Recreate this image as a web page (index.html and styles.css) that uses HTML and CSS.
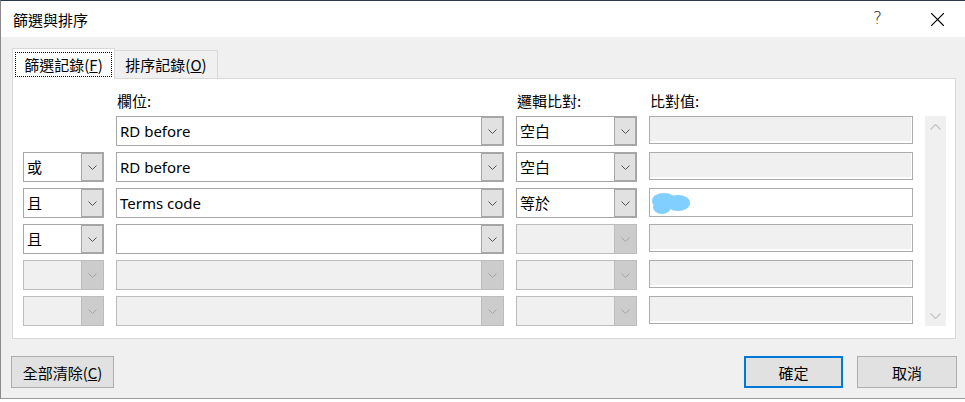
FILE: index.html
```html
<!DOCTYPE html>
<html lang="zh-Hant">
<head>
    <meta charset="UTF-8">
    <title>篩選與排序</title>
    <link rel="stylesheet" href="styles.css">
</head>
<body>
    <div class="window">
        <div class="titlebar">
            <span class="title">篩選與排序</span>
            <span class="help">?</span>
            <svg class="close" width="13" height="13" viewBox="0 0 13 13"><path d="M0.5 0.5 L12.5 12.5 M12.5 0.5 L0.5 12.5" stroke="#000" stroke-width="1.1" fill="none"/></svg>
        </div>
        <div class="dialog">
            <div class="tabs">
                <div class="tab active"><span class="focus">篩選記錄(<u>F</u>)</span></div>
                <div class="tab">排序記錄(<u>O</u>)</div>
            </div>
            <div class="panel">
                <div class="grid">
                    <div class="label col-field">欄位:</div>
                    <div class="label col-logic">邏輯比對:</div>
                    <div class="label col-value">比對值:</div>

                    <!-- row 1 -->
                    <div class="col-field combo"><span>RD before</span><i class="drop"><svg viewBox="0 0 9 5"><path d="M0.5 0.5 L4.5 4.5 L8.5 0.5"/></svg></i></div>
                    <div class="combo"><span class="cjk">空白</span><i class="drop"><svg viewBox="0 0 9 5"><path d="M0.5 0.5 L4.5 4.5 L8.5 0.5"/></svg></i></div>
                    <div class="value off"></div>

                    <!-- scrollbar spans all rows -->
                    <div class="scroll">
                        <svg viewBox="0 0 11 6"><path d="M0.5 5.5 L5.5 0.5 L10.5 5.5"/></svg>
                        <svg viewBox="0 0 11 6"><path d="M0.5 0.5 L5.5 5.5 L10.5 0.5"/></svg>
                    </div>

                    <!-- row 2 -->
                    <div class="combo"><span class="cjk">或</span><i class="drop"><svg viewBox="0 0 9 5"><path d="M0.5 0.5 L4.5 4.5 L8.5 0.5"/></svg></i></div>
                    <div class="combo"><span>RD before</span><i class="drop"><svg viewBox="0 0 9 5"><path d="M0.5 0.5 L4.5 4.5 L8.5 0.5"/></svg></i></div>
                    <div class="combo"><span class="cjk">空白</span><i class="drop"><svg viewBox="0 0 9 5"><path d="M0.5 0.5 L4.5 4.5 L8.5 0.5"/></svg></i></div>
                    <div class="value off"></div>

                    <!-- row 3 -->
                    <div class="combo"><span class="cjk">且</span><i class="drop"><svg viewBox="0 0 9 5"><path d="M0.5 0.5 L4.5 4.5 L8.5 0.5"/></svg></i></div>
                    <div class="combo"><span>Terms code</span><i class="drop"><svg viewBox="0 0 9 5"><path d="M0.5 0.5 L4.5 4.5 L8.5 0.5"/></svg></i></div>
                    <div class="combo"><span class="cjk">等於</span><i class="drop"><svg viewBox="0 0 9 5"><path d="M0.5 0.5 L4.5 4.5 L8.5 0.5"/></svg></i></div>
                    <div class="value"><svg class="blot" width="42" height="24" viewBox="0 0 42 24"><ellipse cx="13" cy="10" rx="12" ry="8"/><ellipse cx="27" cy="12" rx="12" ry="8"/><ellipse cx="11" cy="16" rx="9" ry="7"/></svg></div>

                    <!-- row 4 -->
                    <div class="combo"><span class="cjk">且</span><i class="drop"><svg viewBox="0 0 9 5"><path d="M0.5 0.5 L4.5 4.5 L8.5 0.5"/></svg></i></div>
                    <div class="combo"><span></span><i class="drop"><svg viewBox="0 0 9 5"><path d="M0.5 0.5 L4.5 4.5 L8.5 0.5"/></svg></i></div>
                    <div class="combo off"><span></span><i class="drop"><svg viewBox="0 0 9 5"><path d="M0.5 0.5 L4.5 4.5 L8.5 0.5"/></svg></i></div>
                    <div class="value off"></div>

                    <!-- row 5 -->
                    <div class="combo off"><span></span><i class="drop"><svg viewBox="0 0 9 5"><path d="M0.5 0.5 L4.5 4.5 L8.5 0.5"/></svg></i></div>
                    <div class="combo off"><span></span><i class="drop"><svg viewBox="0 0 9 5"><path d="M0.5 0.5 L4.5 4.5 L8.5 0.5"/></svg></i></div>
                    <div class="combo off"><span></span><i class="drop"><svg viewBox="0 0 9 5"><path d="M0.5 0.5 L4.5 4.5 L8.5 0.5"/></svg></i></div>
                    <div class="value off"></div>

                    <!-- row 6 -->
                    <div class="combo off"><span></span><i class="drop"><svg viewBox="0 0 9 5"><path d="M0.5 0.5 L4.5 4.5 L8.5 0.5"/></svg></i></div>
                    <div class="combo off"><span></span><i class="drop"><svg viewBox="0 0 9 5"><path d="M0.5 0.5 L4.5 4.5 L8.5 0.5"/></svg></i></div>
                    <div class="combo off"><span></span><i class="drop"><svg viewBox="0 0 9 5"><path d="M0.5 0.5 L4.5 4.5 L8.5 0.5"/></svg></i></div>
                    <div class="value off"></div>
                </div>
            </div>
            <div class="buttons">
                <button class="btn clear">全部清除(<u>C</u>)</button>
                <span class="spacer"></span>
                <button class="btn ok">確定</button>
                <button class="btn">取消</button>
            </div>
        </div>
    </div>
</body>
</html>
```

FILE: styles.css
```css
body {
    margin: 0;
    background-color: #fff;
    font-family: "Noto Sans", "Noto Sans CJK TC", sans-serif;
    color: #000;
    width: 965px;
    height: 402px;
    overflow: hidden;
}
.window {
    width: 965px;
    height: 399px;
    box-sizing: border-box;
    border-top: 1px solid #2b3a4b;
    border-left: 1px solid #8a8a8a;
    border-bottom: 1px solid #9a9a9a;
    background-color: #f0f0f0;
}
.titlebar {
    height: 36px;
    background-color: #fff;
    display: flex;
    align-items: center;
}
.title {
    margin-left: 12px;
    font-size: 15px;
    font-family: "Noto Sans CJK TC", sans-serif;
    flex-grow: 1;
}
.help {
    font-size: 17px;
    font-family: "DejaVu Sans", sans-serif;
    font-weight: 300;
    margin-right: 49px;
    margin-top: -2px;
    color: #222;
}
.close {
    margin-right: 21px;
    stroke-linecap: square;
}
.dialog {
    padding: 11px 8px 0 11px;
}
.tabs {
    display: flex;
    align-items: flex-end;
    height: 30px;
}
.tab {
    box-sizing: border-box;
    width: 103px;
    height: 28px;
    border: 1px solid #d9d9d9;
    border-bottom: none;
    border-left: none;
    background-color: #f0f0f0;
    font-size: 15px;
    font-family: "Noto Sans CJK TC", sans-serif;
    line-height: 27px;
    text-align: center;
}
.tab.active {
    width: 103px;
    height: 31px;
    margin-bottom: -1px;
    border-left: 1px solid #d9d9d9;
    background-color: #fff;
    position: relative;
    z-index: 1;
    padding: 3px 2px 0 2px;
}
.focus {
    display: block;
    height: 25px;
    box-sizing: border-box;
    border: 1px dotted #000;
    line-height: 24px;
}
.panel {
    width: 944px;
    box-sizing: border-box;
    border: 1px solid #d9d9d9;
    background-color: #fff;
    padding: 13px 0 12px 10px;
}
.grid {
    display: grid;
    grid-template-columns: 81px 388px 121px 264px 21px;
    grid-template-rows: 18px repeat(6, 30px);
    column-gap: 12px;
    row-gap: 6px;
}
.label {
    font-size: 15px;
    font-family: "Noto Sans CJK TC", sans-serif;
    line-height: 18px;
    padding-left: 1px;
}
.col-field { grid-column: 2; }
.col-logic { grid-column: 3; }
.col-value { grid-column: 4; }
.combo {
    display: flex;
    box-sizing: border-box;
    border: 1px solid #a6a6a6;
    background-color: #fff;
    font-size: 15px;
    line-height: 28px;
}
.combo span {
    flex-grow: 1;
    padding-left: 3px;
    white-space: nowrap;
}
.combo span.cjk {
    font-family: "Noto Sans CJK TC", sans-serif;
}
.drop {
    width: 21px;
    border-left: 1px solid #a6a6a6;
    box-shadow: inset -1px -1px 0 #a6a6a6, inset 0 1px 0 #a6a6a6;
    background-color: #e1e1e1;
    display: flex;
    align-items: center;
    justify-content: center;
}
.drop svg {
    width: 9px;
    height: 5px;
    fill: none;
    stroke: #555;
    stroke-width: 1;
}
.combo.off {
    background-color: #f0f0f0;
    border-color: #bcbcbc;
}
.combo.off .drop {
    background-color: #cccccc;
    border-left-color: #bcbcbc;
    box-shadow: none;
}
.combo.off .drop svg { stroke: #a5a5a5; }
.value {
    box-sizing: border-box;
    height: 29px;
    border: 1px solid #acacac;
    background-color: #fff;
    padding: 2px 0 0 1px;
}
.value.off {
    height: 28px;
    background-color: #f0f0f0;
    box-shadow: inset -1px -2px 0 #fff;
}
.blot { fill: #80cfff; }
.scroll {
    grid-column: 5;
    grid-row: 2 / span 6;
    background-color: #f0f0f0;
    display: flex;
    flex-direction: column;
    justify-content: space-between;
    align-items: center;
    padding: 8px 0 7px 0;
}
.scroll svg {
    width: 11px;
    height: 6px;
    fill: none;
    stroke: #c2c2c2;
    stroke-width: 1.2;
}
.buttons {
    display: flex;
    margin-top: 17px;
    margin-left: -1px;
    gap: 14px;
}
.spacer { flex-grow: 1; }
.btn {
    box-sizing: border-box;
    width: 100px;
    height: 32px;
    border: 1px solid #adadad;
    background-color: #e1e1e1;
    font-family: "Noto Sans CJK TC", sans-serif;
    font-size: 15px;
    color: #000;
    padding: 0;
}
.btn.clear { width: 103px; }
.btn.ok {
    width: 99px;
    border: 2px solid #0078d7;
}
```
